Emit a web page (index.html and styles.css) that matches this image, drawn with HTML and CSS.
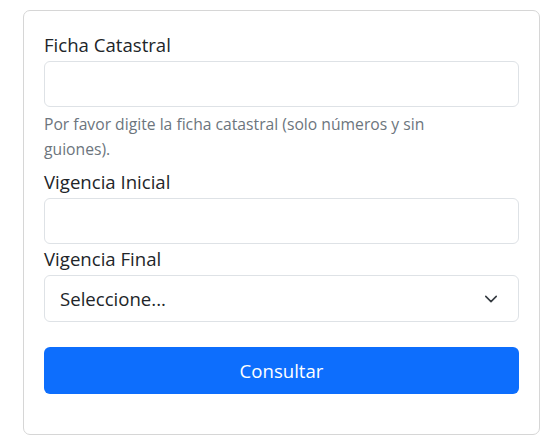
FILE: index.html
```html
<!DOCTYPE html>
<html lang="es">

<head>
    <meta charset="UTF-8"/>
    <meta name="viewport" content="width=device-width, initial-scale=1.0"/>
    <title>Consulta Ficha Catastral</title>
    <link rel="stylesheet" href="styles.css">
</head>

<body>
<div class="card">
    <form class="card-body">
        <label class="form-label" for="ficha">Ficha Catastral</label>
        <input class="form-control" type="text" id="ficha"/>
        <div class="form-text">Por favor digite la ficha catastral (solo números y sin guiones).</div>

        <label class="form-label" for="inicial">Vigencia Inicial</label>
        <input class="form-control" type="text" id="inicial"/>

        <label class="form-label" for="final">Vigencia Final</label>
        <div class="select-wrap">
            <select class="form-select" id="final">
                <option>Seleccione...</option>
            </select>
            <svg class="select-arrow" viewBox="0 0 16 16" width="14" height="14">
                <path d="m2 5 6 6 6-6" fill="none" stroke="#343a40" stroke-width="1.8"
                      stroke-linecap="round" stroke-linejoin="round"/>
            </svg>
        </div>

        <button class="btn-primary" type="button">Consultar</button>
    </form>
</div>
</body>
</html>
```

FILE: styles.css
```css
* {
    box-sizing: border-box;
}

body {
    margin: 0;
    padding: 10px 14px 0 23px;
    background: #fff;
    color: #212529;
    font-family: "Open Sans", "Noto Sans", sans-serif;
}

.card {
    border: 1px solid #d6d6d6;
    border-radius: 7px;
    background: #fff;
}

.card-body {
    padding: 19px 20px 40px 20px;
    display: flex;
    flex-direction: column;
}

.form-label {
    display: block;
    font-size: 18.6px;
    line-height: 29px;
    margin-bottom: 2px;
}

.form-control,
.form-select {
    display: block;
    width: 100%;
    height: 46px;
    border: 1px solid #dee2e6;
    border-radius: 6px;
    background: #fff;
    padding: 0 14px;
    font-family: inherit;
    font-size: 18.6px;
    color: #212529;
    outline: none;
}

.form-text {
    margin-top: 5px;
    margin-bottom: 5px;
    max-width: 410px;
    font-size: 15.7px;
    line-height: 25px;
    color: #6c757d;
}

.select-wrap {
    position: relative;
}

.form-select {
    height: 47px;
    appearance: none;
    -webkit-appearance: none;
    padding-left: 15px;
}

.select-arrow {
    position: absolute;
    right: 21px;
    top: 17px;
    width: 14px;
    height: 14px;
    pointer-events: none;
}

.btn-primary {
    margin-top: 25px;
    height: 47px;
    width: 100%;
    border: none;
    border-radius: 6px;
    background: #0d6efd;
    color: #fff;
    font-family: inherit;
    font-size: 18.6px;
    cursor: pointer;
}
```
